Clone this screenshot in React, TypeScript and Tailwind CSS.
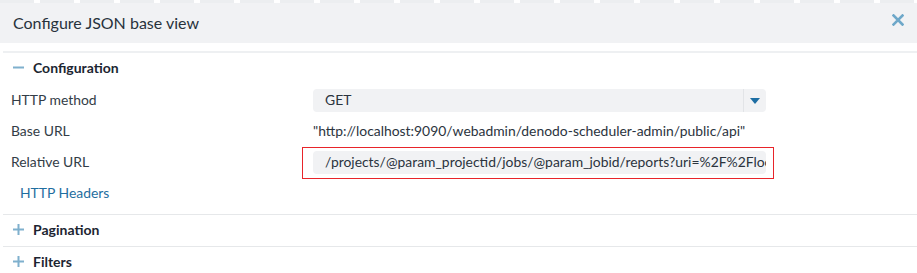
import { Fragment } from "react";

const rows = [
  { label: "HTTP method", kind: "select", value: "GET" },
  {
    label: "Base URL",
    kind: "text",
    value: '"http://localhost:9090/webadmin/denodo-scheduler-admin/public/api"',
  },
  {
    label: "Relative URL",
    kind: "input",
    value:
      "/projects/@param_projectid/jobs/@param_jobid/reports?uri=%2F%2Flocalhost%3A9090%2Fwebadmin",
  },
];

const Toggle = ({ open }: { open: boolean }) => (
  <svg width="11" height="11" viewBox="0 0 11 11" className="shrink-0">
    <rect x="0" y="4.5" width="11" height="2" fill="#7fb0cd" />
    {!open && <rect x="4.5" y="0" width="2" height="11" fill="#7fb0cd" />}
  </svg>
);

const SectionHead = ({ title, open, first }: { title: string; open: boolean; first?: boolean }) => (
  <div
    className={
      first
        ? "flex items-center gap-[9px] px-[10px] h-[32px] pb-[3px]"
        : "flex items-center gap-[9px] px-[10px] h-[31px] pb-[2px]"
    }
  >
    <Toggle open={open} />
    <span className="text-[14px] font-bold text-[#1c2531]">{title}</span>
  </div>
);

const App = () => {
  return (
    <div
      className="w-[917px] h-[273px] overflow-hidden bg-white"
      style={{ fontFamily: "Lato, 'Liberation Sans', sans-serif" }}
    >
      <div className="h-[3px] bg-[repeating-linear-gradient(90deg,#eceef0_0px,#eceef0_34px,#ffffff_34px,#ffffff_40px)]" />
      <div className="h-[40px] bg-[#f1f2f4] flex items-center justify-between pl-[13px] pr-[13px]">
        <h1 className="text-[16px] text-[#28323c]">Configure JSON base view</h1>
        <svg width="12" height="12" viewBox="0 0 12 12" className="mb-[7px]">
          <path d="M1.5 1.5 L10.5 10.5 M10.5 1.5 L1.5 10.5" stroke="#6ea8c9" strokeWidth="2.6" strokeLinecap="square" />
        </svg>
      </div>
      <div className="h-[8px]" />
      <div className="ml-[3px]">
        <div className="border-t-2 border-[#eef0f2]">
          <SectionHead title="Configuration" open first />
          <div className="grid grid-cols-[302px_453px] px-[8px] text-[13.9px] text-[#333d47]">
            {rows.map((r) => (
              <Fragment key={r.label}>
                <div className="h-[31px] flex items-center">{r.label}</div>
                <div className="h-[31px] flex items-center relative">
                  {r.kind === "select" && (
                    <div className="w-[453px] h-[23px] rounded-[4px] bg-[#f1f2f4] flex items-center">
                      <span className="flex-1 pl-[12px] text-[#2b343e]">{r.value}</span>
                      <div className="w-[23px] h-full border-l border-[#e2e4e7] flex items-center justify-center">
                        <svg width="10" height="6" viewBox="0 0 10 6">
                          <path d="M0 0 H10 L5 6 Z" fill="#1d6ea3" />
                        </svg>
                      </div>
                    </div>
                  )}
                  {r.kind === "text" && (
                    <span className="whitespace-nowrap text-[#2b343e]">{r.value}</span>
                  )}
                  {r.kind === "input" && (
                    <>
                      <div className="w-[453px] h-[23px] rounded-[4px] bg-[#f1f2f4] flex items-center pl-[12px] pr-[2px] overflow-hidden">
                        <span className="whitespace-nowrap text-[#2b343e]">{r.value}</span>
                      </div>
                      <div className="absolute -left-[11px] top-[0px] w-[472px] h-[32px] border border-[#e8242a] pointer-events-none" />
                    </>
                  )}
                </div>
              </Fragment>
            ))}
          </div>
          <div className="h-[31px] flex items-center pl-[17px]">
            <a className="text-[13.9px] text-[#1f6ea0] cursor-pointer">HTTP Headers</a>
          </div>
          <div className="h-[5px]" />
        </div>
        <div className="border-t border-[#e6e8ea]">
          <SectionHead title="Pagination" open={false} />
        </div>
        <div className="border-t border-[#e6e8ea]">
          <SectionHead title="Filters" open={false} />
        </div>
      </div>
    </div>
  );
};

export default App;
